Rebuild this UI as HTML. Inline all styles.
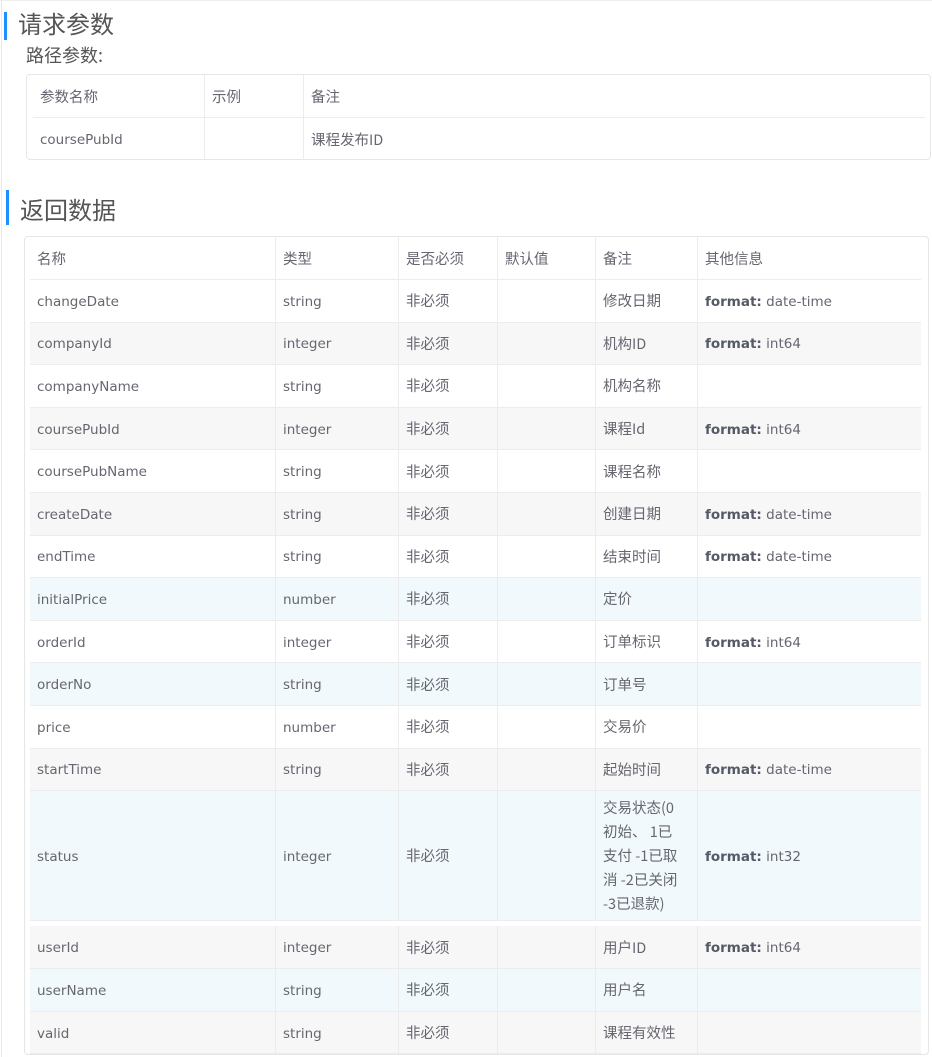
<!DOCTYPE html>
<html><head><meta charset="utf-8"><style>
*{margin:0;padding:0;box-sizing:border-box}
body{width:932px;height:1057px;background:#fff;font-family:"DejaVu Sans","Noto Sans CJK SC",sans-serif;color:#676670;font-size:13.5px;position:relative;overflow:hidden}
.pageline{position:absolute;left:1px;top:0;width:1px;height:1057px;background:#e8e8e8}
.topline{position:absolute;left:0;top:0;width:932px;height:1px;background:#eee}
.h{position:absolute;font-size:24px;color:#555;line-height:30px;font-family:"Noto Sans CJK SC",sans-serif}
.bar{position:absolute;width:3px;background:#1e90ff}
.box{position:absolute;border:1px solid #e6e6e6;border-radius:4px;background:#fff}
.row{position:absolute;display:flex;border-bottom:1px solid #ececec}
.c{border-right:1px solid #ececec;padding-left:7px;display:flex;align-items:center;height:100%;padding-top:2px}
.c:last-child{border-right:none}
.z{font-family:"Noto Sans CJK SC",sans-serif;font-size:14.5px;padding-top:0}
.g{background:#f7f7f7}.b{background:#f1f9fd}
b{color:#555a66}
</style></head><body>
<div class="topline"></div><div class="pageline"></div>
<div class="bar" style="left:4px;top:12px;height:28px"></div>
<div class="h" style="left:18px;top:8px">请求参数</div>
<div class="h" style="left:26px;top:40px;font-size:18px;color:#555">路径参数:</div>
<div class="box" style="left:26px;top:74px;width:905px;height:86px">
 <div class="row" style="left:6px;top:0;width:892px;height:43px"><div class="c z" style="width:172px">参数名称</div><div class="c z" style="width:99px">示例</div><div class="c z" style="flex:1">备注</div></div>
 <div class="row" style="left:6px;top:43px;width:892px;height:42px;border-bottom:none"><div class="c" style="width:172px">coursePubId</div><div class="c" style="width:99px"></div><div class="c z" style="flex:1">课程发布ID</div></div>
</div>
<div class="bar" style="left:6px;top:190px;height:35px"></div>
<div class="h" style="left:20px;top:194px;font-size:24px">返回数据</div>
<div class="box" style="left:24px;top:236px;width:905px;height:819px" id="t"></div>
<div id="rows"></div>
<script>
var d=[["名称","类型","是否必须","默认值","备注","其他信息","",43],
["changeDate","string","非必须","","修改日期","date-time",""],
["companyId","integer","非必须","","机构ID","int64","g"],
["companyName","string","非必须","","机构名称","",""],
["coursePubId","integer","非必须","","课程Id","int64","g"],
["coursePubName","string","非必须","","课程名称","",""],
["createDate","string","非必须","","创建日期","date-time","g"],
["endTime","string","非必须","","结束时间","date-time",""],
["initialPrice","number","非必须","","定价","","b"],
["orderId","integer","非必须","","订单标识","int64",""],
["orderNo","string","非必须","","订单号","","b"],
["price","number","非必须","","交易价","",""],
["startTime","string","非必须","","起始时间","date-time","g"],
["status","integer","非必须","","交易状态(0<br>初始、 1已<br>支付 -1已取<br>消 -2已关闭<br>-3已退款)","int32","b",130],
["userId","integer","非必须","","用户ID","int64","g",43,5],
["userName","string","非必须","","用户名","","b"],
["valid","string","非必须","","课程有效性","","g"]];
var w=[246,123,99,98,102,223],y=237,h="";
d.forEach(function(r,i){var ht=r[7]||42.6;y+=(r[8]||0);
h+='<div class="row '+r[6]+'" style="left:30px;top:'+y+'px;width:891px;height:'+ht+'px">';
for(var k=0;k<6;k++){var t=r[k];if(k==5&&t&&i>0)t='<b>format:</b>&nbsp;'+t;
var z=(i==0||k==2||k==4)?' z':'';
var st='width:'+w[k]+'px';if(k==4&&i==13)st+=';line-height:24px;white-space:nowrap;';
h+='<div class="c'+z+'" style="'+st+'"><span>'+t+'</span></div>';}
h+='</div>';y+=ht;});
document.getElementById('rows').innerHTML=h;
</script>
</body></html>
